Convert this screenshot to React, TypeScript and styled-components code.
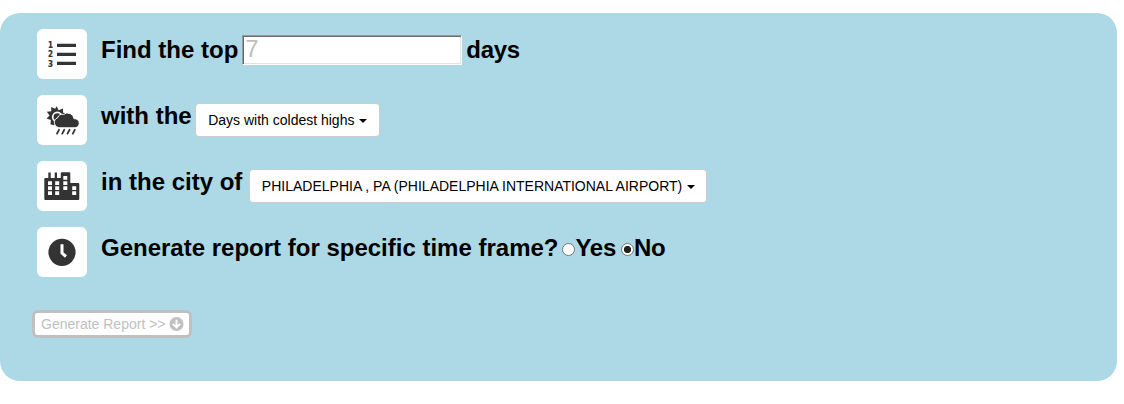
import React from 'react';
import styled, { createGlobalStyle } from 'styled-components';

const GlobalStyle = createGlobalStyle`
  * { box-sizing: border-box; }
  body { margin: 0; background: #fff; font-family: "Liberation Sans", Arial, sans-serif; color: #000; }
`;

const Panel = styled.main`
  width: 1117px;
  height: 368px;
  margin-top: 13px;
  padding: 16px 0 0 37px;
  border-radius: 20px;
  background: #add8e6;
`;

const Row = styled.div`
  display: flex;
  align-items: flex-start;
  height: 66px;
`;

const IconTile = styled.div`
  width: 50px;
  height: 50px;
  margin-right: 14px;
  border-radius: 6px;
  background: #fff;
  svg { display: block; }
`;

const Label = styled.span<{ $gap?: number; $tight?: boolean }>`
  margin: 7px ${p => p.$gap ?? 0}px 0 0;
  font-size: 24px;
  font-weight: 700;
  line-height: 28px;
  letter-spacing: ${p => (p.$tight ? '-0.3px' : 'normal')};
  white-space: nowrap;
`;

const CountInput = styled.input`
  width: 220px;
  height: 30px;
  margin: 6px 4px 0 0;
  padding: 0 2px 2px;
  border: 1px solid;
  border-color: #9a9a9a #fff #fff #9a9a9a;
  border-radius: 0;
  box-shadow: inset 1px 1px #696969, inset -1px -1px #e3e3e3;
  font: 24px "Liberation Sans", Arial, sans-serif;
  outline: 0;
  &::placeholder { color: #c0c0c0; opacity: 1; }
`;

const Dropdown = styled.button<{ $width: number }>`
  display: flex;
  align-items: center;
  width: ${p => p.$width}px;
  height: 34px;
  margin: 8px 0 0;
  padding: 0 0 0 12px;
  border: 1px solid #ccc;
  border-radius: 4px;
  background: #fff;
  color: #000;
  font: 14px "Liberation Sans", Arial, sans-serif;
  white-space: nowrap;
`;

const Caret = styled.span`
  margin: 1px 0 0 4.5px;
  border-top: 4px solid #000;
  border-left: 4px solid transparent;
  border-right: 4px solid transparent;
`;

const Radio = styled.input`
  width: 13px;
  height: 13px;
  margin: 16px 0 0 0;
  appearance: none;
  border: 1px solid #767676;
  border-radius: 50%;
  background: #fff;
  &:checked { background: radial-gradient(circle, #222 0 3.3px, #fff 4px); }
`;

const ReportButton = styled.button`
  display: flex;
  align-items: center;
  width: 160px;
  height: 28px;
  margin: 17px 0 0 -5px;
  padding: 0 0 0 6px;
  border: 3px solid #c0c0c0;
  border-radius: 6px;
  background: #fff;
  color: #c0c0c0;
  font: 14px "Liberation Sans", Arial, sans-serif;
  white-space: nowrap;
  svg { margin-left: 3px; }
`;

const ink = '#333';

const ListIcon = () => (
  <svg width="50" height="50" fill={ink}>
    <g fontFamily="DejaVu Sans" fontWeight="700" fontSize="8" stroke={ink} strokeWidth="0.2">
      <text x="11" y="19" textLength="5" lengthAdjust="spacingAndGlyphs">1</text>
      <text x="11" y="28.3" textLength="5" lengthAdjust="spacingAndGlyphs">2</text>
      <text x="11" y="37.5" textLength="5" lengthAdjust="spacingAndGlyphs">3</text>
    </g>
    <path d="M20 14.7h19v3.3H20zM20 23.7h19v3.3H20zM20 32.7h19v3.3H20z" />
  </svg>
);

const WeatherIcon = () => (
  <svg width="50" height="50">
    <path
      fill={ink}
      d="m19.7 11.3 1.9 4 4.4-1.8.1 4.2 4 .6-2.6 3.6L17 30.2l-3.6-.9.5-4.3-4.4-1.4 3.1-3.2-2.8-3.7 4.5-.5-.1-4.3 3.9 1.9z"
    />
    <circle cx="20.3" cy="22" r="4.6" fill={ink} stroke="#fff" strokeWidth="1.7" />
    <path
      fill={ink}
      stroke="#fff"
      strokeWidth="1"
      d="M22 32.8a5.2 5.2 0 0 1-1.4-10 5.2 5.2 0 0 1 6-3.4 6.4 6.4 0 0 1 10.4 4.3 4.6 4.6 0 1 1 0 9.1z"
    />
    <path d="m22 34.8-2 3.8m7.2-3.8-2 3.8m7.3-3.8-2 3.8m7.3-3.8-2 3.8" fill="none" stroke={ink} strokeWidth="1.8" strokeLinecap="round" />
  </svg>
);

const CityIcon = () => (
  <svg width="50" height="50">
    <path fill={ink} d="M7.3 38V18q0-1 1-1h3v-5.5h2.4V17h4v-5.5H20V17h3.8v-4.7q0-1 1-1h7.5q1 0 1 1V22h8q1 0 1 1v15q0 1-1 1h-33q-1 0-1-1z" />
    <path
      fill="#fff"
      d="M11 20.3h4V24h-4zm0 5h4V29h-4zm0 5h4V34h-4zM18.2 20.3h4V24h-4zm0 5h4V29h-4zm0 5h4V34h-4zM26.3 15h4v3.7h-4zm0 5.2h4v3.7h-4zm0 5.1h4V29h-4zM35.2 25.3h4V29h-4zm0 5h4V34h-4z"
    />
  </svg>
);

const ClockIcon = () => (
  <svg width="50" height="50">
    <circle cx="25" cy="25.3" r="13.6" fill={ink} />
    <path d="M25 17.2v8.9l4 3.4" fill="none" stroke="#fff" strokeWidth="3" />
  </svg>
);

const ArrowIcon = () => (
  <svg width="15" height="15" viewBox="0 0 15 15">
    <circle cx="7.5" cy="7" r="7" fill="#c0c0c0" />
    <path d="M7.5 2.7v8M3.8 6.8l3.7 3.7 3.7-3.7" fill="none" stroke="#fff" strokeWidth="1.9" />
  </svg>
);

export default function App() {
  return (
    <>
      <GlobalStyle />
      <Panel>
        <Row>
          <IconTile><ListIcon /></IconTile>
          <Label $gap={4}>Find the top</Label>
          <CountInput placeholder="7" />
          <Label $tight>days</Label>
        </Row>
        <Row>
          <IconTile><WeatherIcon /></IconTile>
          <Label $gap={3.5}>with the</Label>
          <Dropdown $width={185}>Days with coldest highs<Caret /></Dropdown>
        </Row>
        <Row>
          <IconTile><CityIcon /></IconTile>
          <Label $gap={6.5}>in the city of</Label>
          <Dropdown $width={458}>PHILADELPHIA , PA (PHILADELPHIA INTERNATIONAL AIRPORT)<Caret /></Dropdown>
        </Row>
        <Row>
          <IconTile><ClockIcon /></IconTile>
          <Label $gap={4}>Generate report for specific time frame?</Label>
          <Radio type="radio" name="frame" />
          <Label $gap={5} $tight>Yes</Label>
          <Radio type="radio" name="frame" defaultChecked />
          <Label $tight>No</Label>
        </Row>
        <ReportButton>Generate Report &gt;&gt;<ArrowIcon /></ReportButton>
      </Panel>
    </>
  );
}
